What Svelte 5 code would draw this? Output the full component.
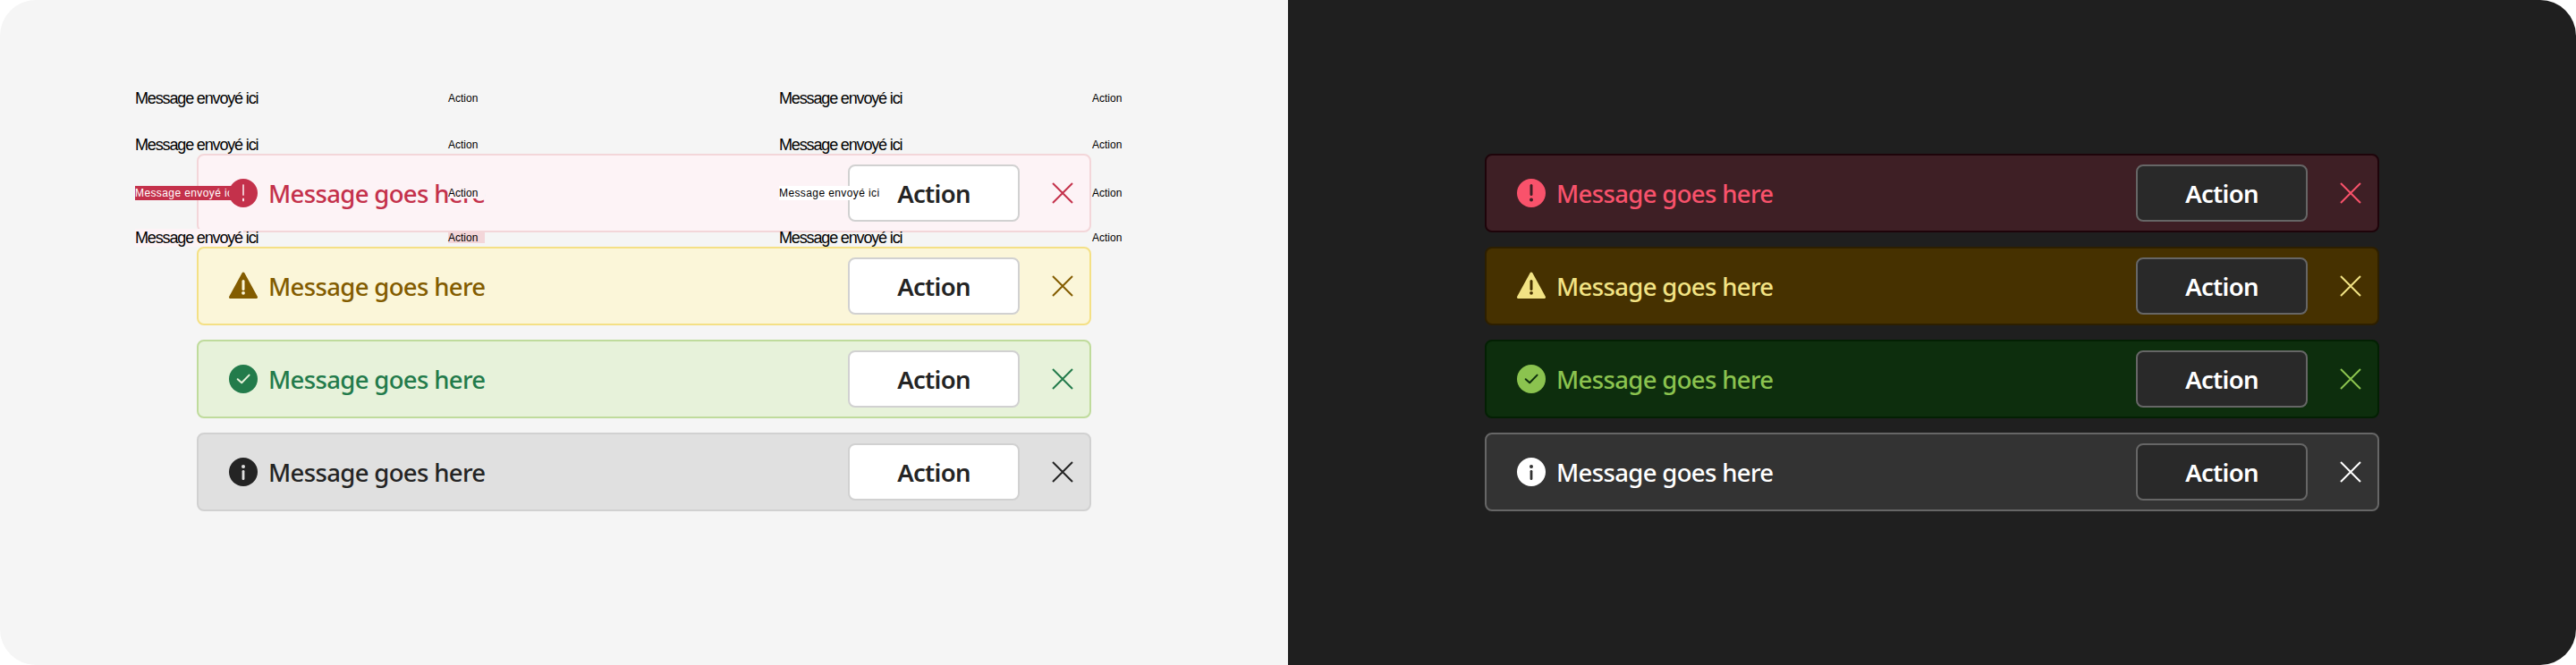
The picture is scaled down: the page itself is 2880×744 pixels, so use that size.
<script>
  const kinds = ['error', 'warning', 'success', 'info'];

  // leftovers of a french table that sit on top of the light bars
  const ghostRows = [
    { msg: '', act: '', msg2: '', act2: '' },
    { msg: '', act: '', msg2: '', act2: '' },
    { msg: 'selected', act: 'masked', msg2: 'white', act2: '' },
    { msg: 'tint', act: 'pink', msg2: '', act2: '' }
  ];
</script>

{#snippet icon(kind)}
  <svg class="icon" width="32" height="32" viewBox="0 0 32 32">
    {#if kind === 'error'}
      <circle class="fill" cx="16" cy="16" r="16" />
      <rect class="cut bang" x="14.5" y="6" width="3" height="13" rx="1.5" />
      <circle class="cut bang" cx="16" cy="23.5" r="2" />
    {:else if kind === 'warning'}
      <polygon class="fill tri" points="16,2 30.5,28.5 1.5,28.5" />
      <rect class="cut" x="14.5" y="9" width="3" height="12" rx="1.5" />
      <circle class="cut" cx="16" cy="23.8" r="1.9" />
    {:else if kind === 'success'}
      <circle class="fill" cx="16" cy="16" r="16" />
      <path class="tick" d="M9.7 16.2 L14.2 20.3 L22.6 11.6" />
    {:else}
      <circle class="fill" cx="16" cy="16" r="16" />
      <circle class="cut" cx="16" cy="10" r="2" />
      <rect class="cut" x="14.6" y="14" width="2.8" height="11" rx="1.2" />
    {/if}
  </svg>
{/snippet}

{#snippet bars()}
  {#each kinds as kind}
    <div class="bar {kind}">
      {@render icon(kind)}
      <span class="message">Message goes here</span>
      <button class="action">Action</button>
      <svg class="close" width="24" height="24" viewBox="0 0 24 24">
        <path d="M1 1 L23 23 M23 1 L1 23" />
      </svg>
    </div>
  {/each}
{/snippet}

<main class="page">
  <section class="panel light">
    {@render bars()}
    <div class="ghost">
      {#each ghostRows as row}
        <span class="g-msg {row.msg}">Message envoyé ici</span>
        <span class="g-act {row.act}">Action</span>
        <span class="g-msg {row.msg2}">Message envoyé ici</span>
        <span class="g-act {row.act2}">Action</span>
      {/each}
    </div>
  </section>
  <section class="panel dark">
    {@render bars()}
  </section>
</main>

<style>
  :global(body) {
    margin: 0;
    background: #fff;
  }

  .page {
    display: grid;
    grid-template-columns: 1440px 1440px;
    height: 744px;
    width: 2880px;
    font-family: "Noto Sans", "Open Sans", sans-serif;
  }

  .panel {
    position: relative;
    display: flex;
    flex-direction: column;
    align-items: center;
    justify-content: center;
    gap: 16px;
  }

  .panel.light {
    background: #f5f5f5;
    border-radius: 40px 0 0 40px;
    --btn-bg: #fff;
    --btn-border: #d1d1d1;
    --btn-fg: #242424;
  }

  .panel.dark {
    background: #1f1f1f;
    border-radius: 0 40px 40px 0;
    --btn-bg: #292929;
    --btn-border: #666;
    --btn-fg: #fff;
  }

  .light .error { --bg: #fdf3f6; --line: #f3d6d9; --fg: #c4314b; }
  .light .warning { --bg: #fbf6d9; --line: #f4e085; --fg: #835c00; }
  .light .success { --bg: #e7f2da; --line: #bfdb9c; --fg: #237b4b; }
  .light .info { --bg: #e0e0e0; --line: #d1d1d1; --fg: #242424; }
  .dark .error { --bg: #3e1f25; --line: #1e040a; --fg: #f9526b; }
  .dark .warning { --bg: #463100; --line: #2d1f00; --fg: #f2e384; }
  .dark .success { --bg: #0d2e0d; --line: #032003; --fg: #8bc34f; }
  .dark .info { --bg: #333; --line: #666; --fg: #fff; }

  .bar {
    box-sizing: border-box;
    display: flex;
    align-items: center;
    width: 1000px;
    height: 88px;
    padding: 0 18px 0 34px;
    background: var(--bg);
    border: 2px solid var(--line);
    border-radius: 8px;
    color: var(--fg);
  }

  .icon {
    position: relative;
    z-index: 2;
    flex: none;
    margin-right: 12px;
  }

  .fill {
    fill: var(--fg);
  }

  .tri {
    stroke: var(--fg);
    stroke-width: 3;
    stroke-linejoin: round;
  }

  .cut {
    fill: var(--bg);
  }

  .light .bang {
    transform: scaleX(0.5);
    transform-origin: 16px 16px;
  }

  .tick {
    fill: none;
    stroke: var(--bg);
    stroke-width: 2;
    stroke-linecap: round;
    stroke-linejoin: round;
  }

  .message {
    flex: 1;
    padding-top: 2px;
    font-size: 27.5px;
    font-weight: 500;
    line-height: 36px;
    letter-spacing: -0.65px;
  }

  .action {
    box-sizing: border-box;
    width: 192px;
    height: 64px;
    padding: 1px 0 0;
    background: var(--btn-bg);
    border: 2px solid var(--btn-border);
    border-radius: 8px;
    color: var(--btn-fg);
    font-family: inherit;
    font-size: 27.5px;
    font-weight: 600;
    letter-spacing: -0.7px;
  }

  .close {
    flex: none;
    margin-left: 36px;
    fill: none;
    stroke: var(--fg);
    stroke-width: 2;
  }

  .ghost {
    position: absolute;
    z-index: 1;
    top: 84px;
    left: 151px;
    display: grid;
    grid-template-columns: 350px 370px 350px auto;
    grid-template-rows: 52px 52px 56px 44px;
    align-items: center;
    justify-items: start;
    font-family: "Liberation Sans", Arial, sans-serif;
    color: #000;
  }

  .g-msg {
    font-size: 18px;
    line-height: 20px;
    letter-spacing: -1.15px;
  }

  .g-act {
    font-size: 12px;
    line-height: 12px;
  }

  .g-msg.selected,
  .g-msg.white {
    font-size: 12px;
    line-height: 16px;
    letter-spacing: 0.4px;
  }

  .g-msg.selected {
    width: 120px;
    background: #c4314b;
    color: #fff;
  }

  .g-msg.white {
    background: #fff;
  }

  .g-msg.tint {
    background: linear-gradient(90deg, #fdf3f6 121px, transparent 121px);
  }

  .g-act.masked {
    width: 41px;
    background: #fdf3f6;
  }

  .g-act.pink {
    width: 41px;
    background: #f3d6d9;
  }
</style>
